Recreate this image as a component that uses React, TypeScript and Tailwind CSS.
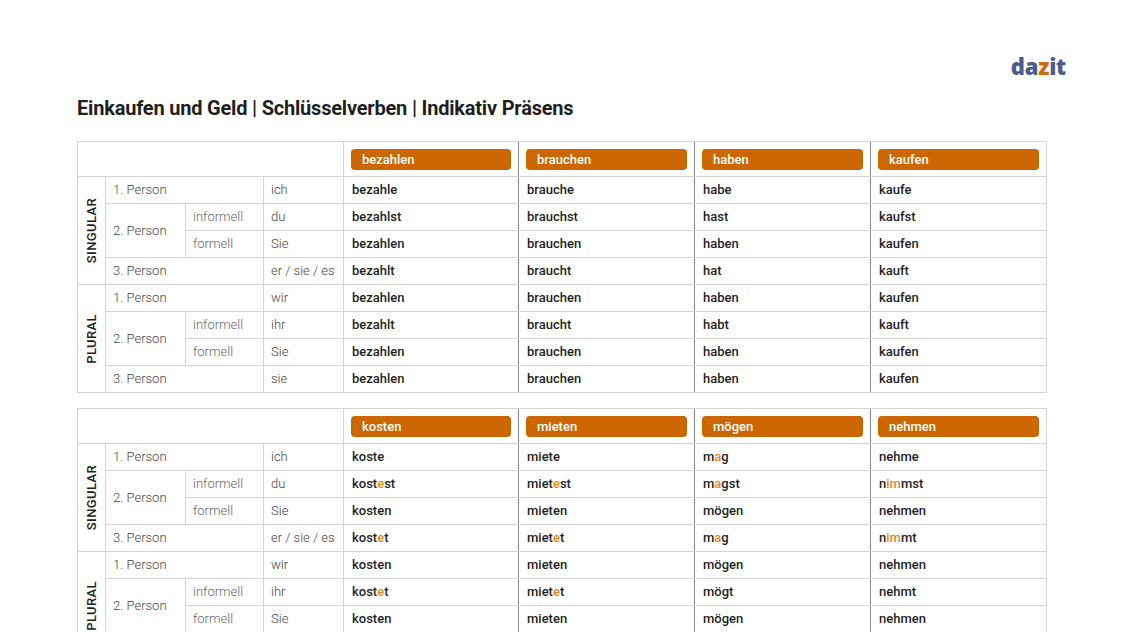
import React from "react";

type Form = string | [string, string, string];

const rows = [
  { group: "SINGULAR", person: "1. Person", sub: "", pron: "ich" },
  { group: "SINGULAR", person: "2. Person", sub: "informell", pron: "du" },
  { group: "SINGULAR", person: "2. Person", sub: "formell", pron: "Sie" },
  { group: "SINGULAR", person: "3. Person", sub: "", pron: "er / sie / es" },
  { group: "PLURAL", person: "1. Person", sub: "", pron: "wir" },
  { group: "PLURAL", person: "2. Person", sub: "informell", pron: "ihr" },
  { group: "PLURAL", person: "2. Person", sub: "formell", pron: "Sie" },
  { group: "PLURAL", person: "3. Person", sub: "", pron: "sie" },
];

const table1: { verb: string; forms: Form[] }[] = [
  { verb: "bezahlen", forms: ["bezahle", "bezahlst", "bezahlen", "bezahlt", "bezahlen", "bezahlt", "bezahlen", "bezahlen"] },
  { verb: "brauchen", forms: ["brauche", "brauchst", "brauchen", "braucht", "brauchen", "braucht", "brauchen", "brauchen"] },
  { verb: "haben", forms: ["habe", "hast", "haben", "hat", "haben", "habt", "haben", "haben"] },
  { verb: "kaufen", forms: ["kaufe", "kaufst", "kaufen", "kauft", "kaufen", "kauft", "kaufen", "kaufen"] },
];

const table2: { verb: string; forms: Form[] }[] = [
  { verb: "kosten", forms: ["koste", ["kost", "e", "st"], "kosten", ["kost", "e", "t"], "kosten", ["kost", "e", "t"], "kosten", "kosten"] },
  { verb: "mieten", forms: ["miete", ["miet", "e", "st"], "mieten", ["miet", "e", "t"], "mieten", ["miet", "e", "t"], "mieten", "mieten"] },
  { verb: "mögen", forms: [["m", "a", "g"], ["m", "a", "gst"], "mögen", ["m", "a", "g"], "mögen", "mögt", "mögen", "mögen"] },
  { verb: "nehmen", forms: ["nehme", ["n", "im", "mst"], "nehmen", ["n", "im", "mt"], "nehmen", "nehmt", "nehmen", "nehmen"] },
];

function FormText({ f }: { f: Form }) {
  if (typeof f === "string") return <>{f}</>;
  return (
    <>
      {f[0]}
      <span className="text-[#e08a1e]">{f[1]}</span>
      {f[2]}
    </>
  );
}

const light = "border border-[#d4d4d4]";

function VerbTable({ data }: { data: { verb: string; forms: Form[] }[] }) {
  return (
    <table className="table-fixed border-collapse w-[969px] text-[13px]">
      <colgroup>
        <col className="w-[28px]" />
        <col className="w-[80px]" />
        <col className="w-[78px]" />
        <col className="w-[80px]" />
        <col className="w-[175px]" />
        <col className="w-[176px]" />
        <col className="w-[176px]" />
        <col className="w-[176px]" />
      </colgroup>
      <thead>
        <tr className="h-[35px]">
          <th colSpan={4} className={light}></th>
          {data.map((d, i) => (
            <th
              key={d.verb}
              className={`border-t border-b border-[#d4d4d4] px-[7px] ${i === 0 ? "border-l" : "border-l border-l-[#8a8a8a]"} ${i === 3 ? "border-r" : ""}`}
            >
              <div className="h-[21px] rounded-[4px] bg-[#cc6600] text-white font-medium text-left pl-[11px] leading-[21px] text-[13px]">
                {d.verb}
              </div>
            </th>
          ))}
        </tr>
      </thead>
      <tbody>
        {rows.map((r, ri) => {
          const isTwoFirst = r.sub === "informell";
          const isTwoSecond = r.sub === "formell";
          return (
            <tr key={ri} className="h-[27px]">
              {ri % 4 === 0 && (
                <td rowSpan={4} className={`${light} p-0 align-middle`}>
                  <div className="flex items-center justify-center">
                    <span className="[writing-mode:vertical-rl] rotate-180 font-medium text-[13px] tracking-[0.03em] text-[#222]">
                      {r.group}
                    </span>
                  </div>
                </td>
              )}
              {r.sub === "" && (
                <td colSpan={2} className={`${light} pl-[7px] font-light text-[#444]`}>
                  {r.person}
                </td>
              )}
              {isTwoFirst && (
                <td rowSpan={2} className={`${light} pl-[7px] font-light text-[#444]`}>
                  {r.person}
                </td>
              )}
              {(isTwoFirst || isTwoSecond) && (
                <td className={`${light} pl-[7px] font-light text-[#666]`}>{r.sub}</td>
              )}
              <td className={`${light} pl-[7px] font-light text-[#444]`}>{r.pron}</td>
              {data.map((d, i) => (
                <td
                  key={d.verb}
                  className={`border-t border-b border-[#d4d4d4] pl-[8px] font-medium text-[#1f1f1f] ${i === 0 ? "border-l" : "border-l border-l-[#8a8a8a]"} ${i === 3 ? "border-r" : ""}`}
                >
                  <FormText f={d.forms[ri]} />
                </td>
              ))}
            </tr>
          );
        })}
      </tbody>
    </table>
  );
}

export default function App() {
  return (
    <div className="min-h-screen bg-white font-['Roboto',sans-serif] text-[#1f1f1f]">
      <div className="flex justify-end pr-[57px] pt-[52px]">
        <div className="font-['Noto_Sans',sans-serif] font-black text-[22px] leading-[28px] tracking-[-0.01em]">
          <span className="text-[#4b5b8c]">da</span>
          <span className="text-[#cc6a10]">z</span>
          <span className="text-[#4b5b8c]">it</span>
        </div>
      </div>
      <div className="pl-[77px] pt-[16px]">
        <h1 className="font-bold text-[20px] leading-[24px] tracking-[-0.01em] text-[#1f1f1f]">
          Einkaufen und Geld | Schlüsselverben | Indikativ Präsens
        </h1>
        <div className="mt-[21px] flex flex-col gap-[15px]">
          <VerbTable data={table1} />
          <VerbTable data={table2} />
        </div>
      </div>
    </div>
  );
}
